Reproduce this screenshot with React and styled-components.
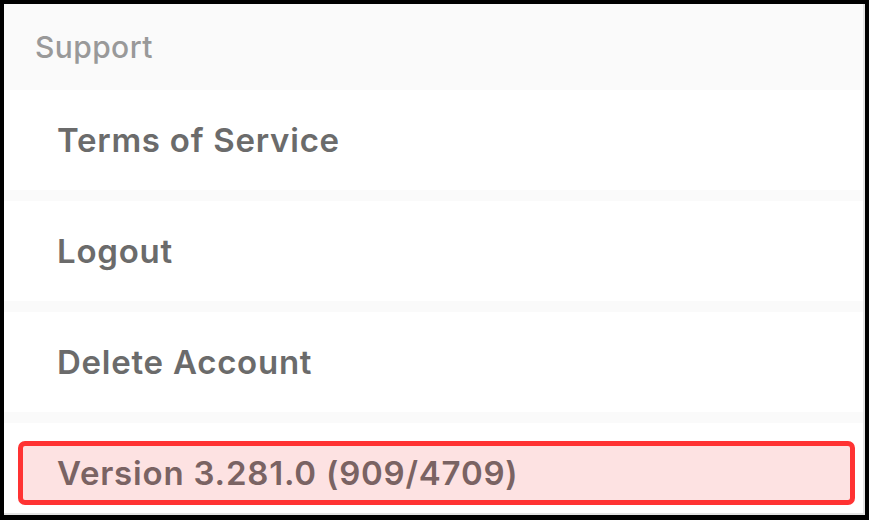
import React from "react";
import styled, { createGlobalStyle } from "styled-components";

const Global = createGlobalStyle`
  html, body { margin: 0; padding: 0; background: #000; }
  body { font-family: Inter, "Noto Sans", sans-serif; -webkit-font-smoothing: antialiased; }
`;

const Frame = styled.div`
  width: 869px;
  height: 520px;
  box-sizing: border-box;
  border-style: solid;
  border-color: #000;
  border-width: 4px 4px 5px 4px;
  overflow: hidden;
  background: #fafafa;
`;

const Screen = styled.div`
  height: 100%;
  box-sizing: border-box;
  border-right: 2px solid #e4e4e4;
  border-bottom: 2px solid #e4e4e4;
  display: flex;
  flex-direction: column;
  overflow: hidden;
`;

const SectionHeader = styled.div`
  height: 86px;
  flex: none;
  display: flex;
  align-items: center;
  padding-left: 31px;
  font-size: 30px;
  font-weight: 500;
  color: #999999;
  letter-spacing: 0.4px;
`;

const List = styled.div`
  display: flex;
  flex-direction: column;
  gap: 11px;
`;

const Row = styled.div`
  height: 100px;
  flex: none;
  background: #fff;
  display: flex;
  align-items: center;
  padding-left: 53px;
  font-size: 33px;
  font-weight: 600;
  color: #6b6b6b;
  letter-spacing: 0.75px;
`;

const VersionRow = styled.div`
  height: 100px;
  flex: none;
  background: #fff;
  box-sizing: border-box;
  padding: 18px 8px 0 14px;
`;

const Highlight = styled.div`
  height: 64px;
  box-sizing: border-box;
  border: 5px solid #ff3333;
  border-radius: 7px;
  background: #fde2e2;
  display: flex;
  align-items: center;
  padding-left: 34px;
  font-size: 33px;
  font-weight: 600;
  color: #7a6363;
  letter-spacing: 0.8px;
`;

export default function App() {
  return (
    <>
      <Global />
      <Frame>
        <Screen>
          <SectionHeader>Support</SectionHeader>
          <List>
            <Row>Terms of Service</Row>
            <Row>Logout</Row>
            <Row>Delete Account</Row>
            <VersionRow>
              <Highlight>Version 3.281.0 (909/4709)</Highlight>
            </VersionRow>
          </List>
        </Screen>
      </Frame>
    </>
  );
}
